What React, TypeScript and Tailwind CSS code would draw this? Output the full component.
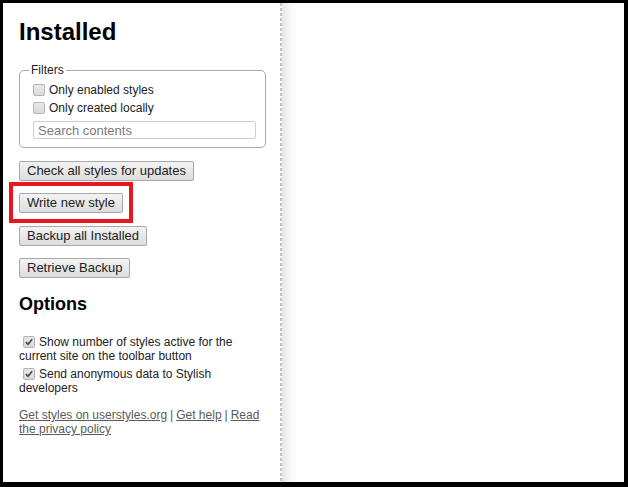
import React from 'react';

function Box({ checked = false, className = '' }: { checked?: boolean; className?: string }) {
  return (
    <span
      className={`inline-flex h-[12px] w-[12px] shrink-0 items-center justify-center rounded-[2px] border border-[#b4b4b4] bg-[linear-gradient(#e9e9e9,#d9d9d9)] ${className}`}
    >
      {checked && (
        <svg viewBox="0 0 12 12" className="h-[10px] w-[10px]">
          <path d="M2.2 6.2 L4.8 8.8 L9.8 2.6" fill="none" stroke="#4a4a4a" strokeWidth="2" />
        </svg>
      )}
    </span>
  );
}

function Btn({ children }: { children: React.ReactNode }) {
  return (
    <button className="h-[20px] rounded-[2px] border border-[#a8a8a8] bg-[linear-gradient(#f3f3f3,#dddddd)] px-[7px] text-[13px] leading-[18px] text-[#222]">
      {children}
    </button>
  );
}

export default function App() {
  return (
    <div className="h-[487px] w-[628px] bg-black pt-[3px] pr-[4px] pb-[5px] pl-[3px] font-['Liberation_Sans',Arial,sans-serif]">
      <div className="flex h-full bg-white">
        {/* sidebar */}
        <div className="w-[277px] shrink-0 pt-[15px] pr-[15px] pl-[16px] text-[12px] text-[#222]">
          <h1 className="text-[24px] leading-[28px] font-bold text-black">Installed</h1>

          <fieldset className="mt-[17px] rounded-[5px] border border-[#a9a9a9] px-[9px] pt-[4px] pb-[8px]">
            <legend className="px-[2px] leading-[14px]">Filters</legend>
            <label className="flex h-[18px] items-center gap-[4px] pl-[4px]">
              <Box />
              Only enabled styles
            </label>
            <label className="flex h-[18px] items-center gap-[4px] pl-[4px]">
              <Box />
              Only created locally
            </label>
            <input
              placeholder="Search contents"
              className="mt-[4px] ml-[4px] block h-[18px] w-[223px] rounded-[2px] border border-[#cfcfcf] bg-white px-[4px] text-[13px] leading-[16px] placeholder:text-[#7a7a7a]"
            />
          </fieldset>

          <div className="mt-[13px] flex flex-col items-start gap-[12.4px]">
            <Btn>Check all styles for updates</Btn>
            <div className="relative">
              <Btn>Write new style</Btn>
              <div className="pointer-events-none absolute -top-[11px] -right-[10px] -bottom-[10px] -left-[10px] border-4 border-[#e8161f]" />
            </div>
            <Btn>Backup all Installed</Btn>
            <Btn>Retrieve Backup</Btn>
          </div>

          <h2 className="mt-[16px] text-[18px] leading-[21px] font-bold text-black">Options</h2>

          <div className="mt-[20px] leading-[14px]">
            <div>
              <Box checked className="mr-[4px] ml-[4px] !inline-flex align-[-1px]" />
              Show number of styles active for the current site on the toolbar button
            </div>
            <div className="mt-[4px]">
              <Box checked className="mr-[4px] ml-[4px] !inline-flex align-[-1px]" />
              Send anonymous data to Stylish developers
            </div>
          </div>

          <p className="mt-[13px] leading-[14px] text-[#5a5a5a]">
            <a className="underline">Get styles on userstyles.org</a>
            <span className="mx-[3px]">|</span>
            <a className="underline">Get help</a>
            <span className="mx-[3px]">|</span>
            <a className="underline">Read the privacy policy</a>
          </p>
        </div>

        {/* dashed divider */}
        <div className="w-[2px] shrink-0 bg-[repeating-linear-gradient(to_bottom,#c2c2c2_0_3px,transparent_3px_5px)]" />

        {/* content area */}
        <div className="flex-1 bg-[linear-gradient(to_right,#e6e6e6,#f7f7f7_8px,#ffffff_16px)]" />
      </div>
    </div>
  );
}
